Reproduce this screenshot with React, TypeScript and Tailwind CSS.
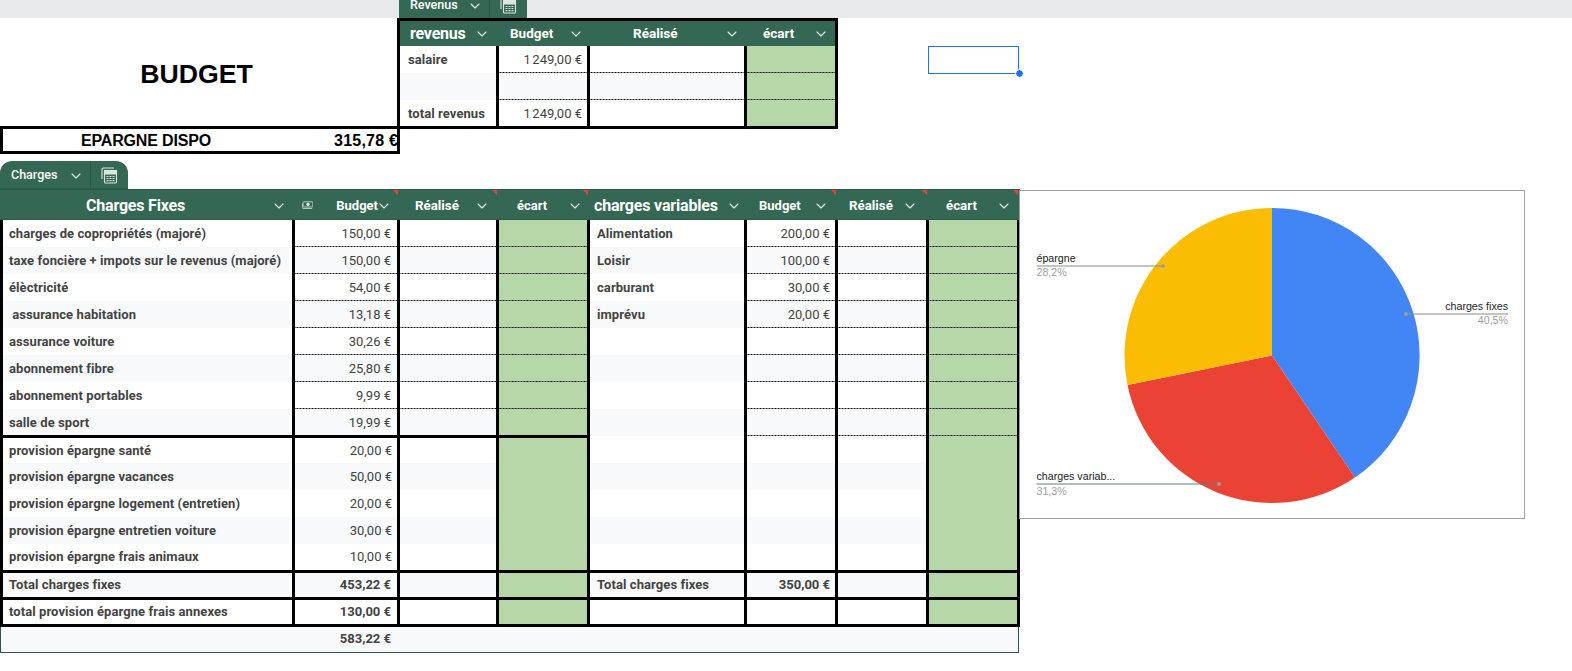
import { ChevronDown } from "lucide-react";

const COLS = "grid grid-cols-[295px_105px_99px_91px_157px_91px_91px_91px] w-[1020px]";
const DASH = "bg-[linear-gradient(to_right,#000_2px,transparent_2px)] bg-[length:3px_1px] bg-bottom bg-repeat-x";

type Kind = "dash" | "split" | "top" | "plain" | "thick";

interface RowData {
  label?: string;
  budget?: string;
  varLabel?: string;
  varBudget?: string;
  kind: Kind;
  h: string;
  strong?: boolean;
}

const rows: RowData[] = [
  { label: "charges de copropriétés (majoré)", budget: "150,00 €", varLabel: "Alimentation", varBudget: "200,00 €", kind: "dash", h: "h-[27px]" },
  { label: "taxe foncière + impots sur le revenus (majoré)", budget: "150,00 €", varLabel: "Loisir", varBudget: "100,00 €", kind: "dash", h: "h-[27px]" },
  { label: "élèctricité", budget: "54,00 €", varLabel: "carburant", varBudget: "30,00 €", kind: "dash", h: "h-[27px]" },
  { label: "\u00a0assurance habitation", budget: "13,18 €", varLabel: "imprévu", varBudget: "20,00 €", kind: "dash", h: "h-[27px]" },
  { label: "assurance voiture", budget: "30,26 €", kind: "dash", h: "h-[27px]" },
  { label: "abonnement fibre", budget: "25,80 €", kind: "dash", h: "h-[27px]" },
  { label: "abonnement portables", budget: "9,99 €", kind: "dash", h: "h-[27px]" },
  { label: "salle de sport", budget: "19,99 €", kind: "split", h: "h-[27px]" },
  { label: "provision épargne santé", budget: "20,00 €", kind: "top", h: "h-[27px]" },
  { label: "provision épargne vacances", budget: "50,00 €", kind: "plain", h: "h-[27px]" },
  { label: "provision épargne logement (entretien)", budget: "20,00 €", kind: "plain", h: "h-[27px]" },
  { label: "provision épargne entretien voiture", budget: "30,00 €", kind: "plain", h: "h-[27px]" },
  { label: "provision épargne frais animaux", budget: "10,00 €", kind: "thick", h: "h-[29px]" },
  { label: "Total charges fixes", budget: "453,22 €", varLabel: "Total charges fixes", varBudget: "350,00 €", kind: "thick", h: "h-[27px]", strong: true },
  { label: "total provision épargne frais annexes", budget: "130,00 €", kind: "thick", h: "h-[27px]", strong: true },
];

function lineClass(kind: Kind, col: number) {
  const left = col < 4;
  const first = col === 0 || col === 4;
  if (kind === "thick") return "border-b-[3px] border-b-black";
  if (kind === "dash") return first ? "" : DASH;
  if (kind === "split") return left ? "border-b border-b-black pt-[1px]" : first ? "" : DASH;
  if (kind === "top") return left ? "border-t-2 border-t-black" : "";
  return "";
}

function Chevron() {
  return <ChevronDown size={16} strokeWidth={1.6} className="shrink-0 text-[#e3ebe7]" />;
}

function TableIcon() {
  return (
    <svg width="17" height="17" viewBox="0 0 17 17" fill="none" stroke="#dbe5e0" strokeWidth="1.1">
      <path d="M1 12V2.5A1.5 1.5 0 0 1 2.5 1H13" />
      <rect x="3.5" y="3.5" width="12" height="12.5" rx="1" />
      <rect x="3.5" y="3.5" width="12" height="3.5" fill="#dbe5e0" />
      <path d="M5.5 9.5h8M5.5 11.5h8M5.5 13.7h8" strokeWidth="1.2" strokeDasharray="2 1" />
    </svg>
  );
}

function MoneyIcon() {
  return (
    <svg width="15" height="11" viewBox="0 0 15 11" fill="none" stroke="#dfe7e3" strokeWidth="1">
      <rect x="1.5" y="0.5" width="13" height="7" rx="1" />
      <circle cx="8" cy="4" r="1.8" fill="#dfe7e3" />
      <path d="M0.5 3v5.5a1 1 0 0 0 1 1h12" />
    </svg>
  );
}

function Tab({ label, className }: { label: string; className: string }) {
  return (
    <div className={`flex w-[128px] h-[28px] items-center bg-[#356854] border-b border-[#2a5a47] text-white ${className}`}>
      <div className="flex w-[91px] h-full items-center justify-between pl-[11px] pr-[6px] pt-[2px] border-r border-[#2a5a47]">
        <span className="text-[12.5px] font-medium">{label}</span>
        <Chevron />
      </div>
      <div className="flex flex-1 justify-center pt-[2px]">
        <TableIcon />
      </div>
    </div>
  );
}

function Flag() {
  return <span className="absolute -top-[2px] right-[2px] w-[5px] h-[5px] bg-[#ea4335] [clip-path:polygon(0_0,100%_0,100%_100%)]" />;
}

function ChargesHeader() {
  return (
    <div className={`${COLS} h-[31px] pt-[2px] bg-[#356854] border-y border-[#2a5a47] text-white text-[13px] font-bold`}>
      <div className="flex items-center pr-[8px]">
        <span className="flex-1 text-center text-[16px] tracking-[-0.2px]">Charges Fixes</span>
        <Chevron />
      </div>
      <div className="relative flex items-center pl-[7px] pr-[8px]">
        <MoneyIcon />
        <span className="ml-[23px] mr-[-2px]">Budget</span>
        <Chevron />
        <Flag />
      </div>
      <div className="relative flex items-center justify-between pl-[15px] pr-[9px]">
        <span className="text-[13.3px]">Réalisé</span>
        <Chevron />
        <Flag />
      </div>
      <div className="relative flex items-center justify-between pl-[18px] pr-[7px]">
        <span>écart</span>
        <Chevron />
        <Flag />
      </div>
      <div className="flex items-center justify-between pl-[4px] pr-[5px]">
        <span className="text-[16px] tracking-[-0.18px]">charges variables</span>
        <Chevron />
      </div>
      <div className="relative flex items-center justify-between pl-[12px] pr-[9px]">
        <span>Budget</span>
        <Chevron />
        <Flag />
      </div>
      <div className="relative flex items-center justify-between pl-[11px] pr-[11px]">
        <span className="text-[13.3px]">Réalisé</span>
        <Chevron />
        <Flag />
      </div>
      <div className="relative flex items-center justify-between pl-[17px] pr-[8px]">
        <span className="text-[13.3px]">écart</span>
        <Chevron />
        <Flag />
      </div>
    </div>
  );
}

function ChargesRow({ row, shaded, index }: { row: RowData; shaded: boolean; index: number }) {
  const values = ["label", "budget", "", "", "varLabel", "varBudget", "", ""] as const;
  return (
    <div className={`${COLS} ${row.h}`}>
      {values.map((key, i) => {
        const text = key ? row[key] : undefined;
        const green = i === 3 || i === 7;
        const name = i === 0 || i === 4;
        const num = i === 1 || i === 5;
        const inset = i === 5 || (index >= 8 && index < 13) ? "pr-[5px]" : "pr-[6px]";
        return (
          <div
            key={i}
            className={`flex items-center border-r-[3px] border-r-black ${i === 0 ? "border-l-[3px] border-l-black pl-[6px]" : ""} ${i === 4 ? "pl-[7px]" : ""} ${
              green ? "bg-[#b6d7a8]" : shaded ? "bg-[#f8f9fa]" : "bg-white"
            } ${name ? "font-bold tracking-[0.08px]" : ""} ${num ? `justify-end ${inset} ${row.strong ? "font-bold" : ""}` : ""} ${lineClass(row.kind, i)}`}
          >
            {text}
          </div>
        );
      })}
    </div>
  );
}

function RevenueTable() {
  const lines = [
    { label: "salaire", value: "1\u202f249,00 €", h: "h-[27px]", bg: "bg-white", dash: true, nudge: "" },
    { label: "", value: "", h: "h-[27px]", bg: "bg-[#f8f9fa]", dash: true, nudge: "" },
    { label: "total revenus", value: "1\u202f249,00 €", h: "h-[26px]", bg: "bg-white", dash: false, nudge: "pt-[1px]" },
  ];
  return (
    <div className="w-[438px] border-y-[3px] border-black">
      <div className="grid grid-cols-[99px_91px_157px_91px] h-[25px] bg-[#356854] text-white text-[13.5px] font-bold">
        <div className="flex items-center justify-between pl-[10px] pr-[9px]">
          <span className="text-[16px] tracking-[-0.2px]">revenus</span>
          <Chevron />
        </div>
        <div className="flex items-center justify-between pl-[11px] pr-[6px]">
          <span>Budget</span>
          <Chevron />
        </div>
        <div className="flex items-center pl-[43px] pr-[7px] justify-between">
          <span>Réalisé</span>
          <Chevron />
        </div>
        <div className="flex items-center justify-between pl-[16px] pr-[6px] border-r-[3px] border-r-black">
          <span>écart</span>
          <Chevron />
        </div>
      </div>
      {lines.map((line, i) => (
        <div key={i} className={`grid grid-cols-[99px_91px_157px_91px] ${line.h}`}>
          <div className={`flex items-center pl-[8px] font-bold tracking-[0.08px] border-r-[3px] border-r-black ${line.bg} ${line.nudge}`}>{line.label}</div>
          <div className={`flex items-center justify-end pr-[5px] border-r-[3px] border-r-black ${line.bg} ${line.nudge} ${line.dash ? DASH : ""}`}>{line.value}</div>
          <div className={`border-r-[3px] border-r-black ${line.bg} ${line.dash ? DASH : ""}`} />
          <div className={`border-r-[3px] border-r-black bg-[#b6d7a8] ${line.dash ? DASH : ""}`} />
        </div>
      ))}
    </div>
  );
}

function PieChart() {
  return (
    <div className="w-[506px] h-[329px] -ml-px mt-px border border-[#9e9e9e] bg-white">
      <svg width="504" height="327" viewBox="0 0 504 327" className="font-['Liberation_Sans',sans-serif] text-[10.67px]">
        <path d="M252 164.5V17A147.5 147.5 0 0 1 335 286.5Z" fill="#4285f4" />
        <path d="M252 164.5L335 286.5A147.5 147.5 0 0 1 107.5 194Z" fill="#ea4335" />
        <path d="M252 164.5L107.5 194A147.5 147.5 0 0 1 252 17Z" fill="#fbbc04" />

        <path d="M16.5 75H143" stroke="#8a8a8a" />
        <circle cx="143" cy="75" r="2" fill="#9e9e9e" />
        <text x="16.5" y="71" className="fill-[#222222]">épargne</text>
        <text x="16.5" y="85" className="fill-[#9e9e9e]">28,2%</text>

        <path d="M386 123H488" stroke="#8a8a8a" />
        <circle cx="386" cy="123" r="2" fill="#9e9e9e" />
        <text x="488" y="119" textAnchor="end" className="fill-[#222222]">charges fixes</text>
        <text x="488" y="132.5" textAnchor="end" className="fill-[#9e9e9e]">40,5%</text>

        <path d="M16.5 293H199" stroke="#5f7f78" />
        <circle cx="199" cy="293" r="2" fill="#9e9e9e" />
        <text x="16.5" y="289" className="fill-[#222222]">charges variab...</text>
        <text x="16.5" y="303.5" className="fill-[#9e9e9e]">31,3%</text>
      </svg>
    </div>
  );
}

export default function App() {
  return (
    <div className="w-[1572px] h-[671px] overflow-hidden bg-white font-[Roboto,sans-serif] text-[13px] text-[#434343]">
      <div className="h-[18px] overflow-hidden bg-[#e8eaed] pl-[399px]">
        <Tab label="Revenus" className="-mt-[9px]" />
      </div>

      <div className="flex items-start">
        <div className="w-[400px] font-['Liberation_Sans',sans-serif] font-bold text-black">
          <div className="flex h-[108px] items-center justify-center border-r-[3px] border-black text-[26.67px] pt-[4px]">
            <span className="mr-[4px]">BUDGET</span>
          </div>
          <div className="flex h-[28px] items-center border-[3px] border-black pt-[2px] text-[16px]">
            <span className="w-[286px] text-center tracking-[-0.15px]">EPARGNE DISPO</span>
            <span className="flex-1 text-right tracking-[0.2px] -mr-px">315,78 €</span>
          </div>
        </div>
        <RevenueTable />
        <div className="relative ml-[90px] mt-[28px] w-[91px] h-[28px] border border-[#1a73e8]">
          <span className="absolute -right-[5px] -bottom-[4px] w-[7px] h-[7px] rounded-full bg-[#1a73e8] outline outline-white" />
        </div>
      </div>

      <Tab label="Charges" className="mt-[7px] rounded-t-[12px]" />

      <div className="flex items-start">
        <div className="w-[1020px]">
          <ChargesHeader />
          {rows.map((row, i) => (
            <ChargesRow key={i} index={i} row={row} shaded={row.strong ? i === 13 : i % 2 === 1} />
          ))}
          <div className="flex w-[1019px] h-[26px] bg-[#f8f9fa] border-x border-b border-[#2a5a47] font-bold">
            <div className="flex w-[399px] items-center justify-end pr-[9px] pb-[2px]">583,22 €</div>
          </div>
        </div>
        <PieChart />
      </div>
    </div>
  );
}
